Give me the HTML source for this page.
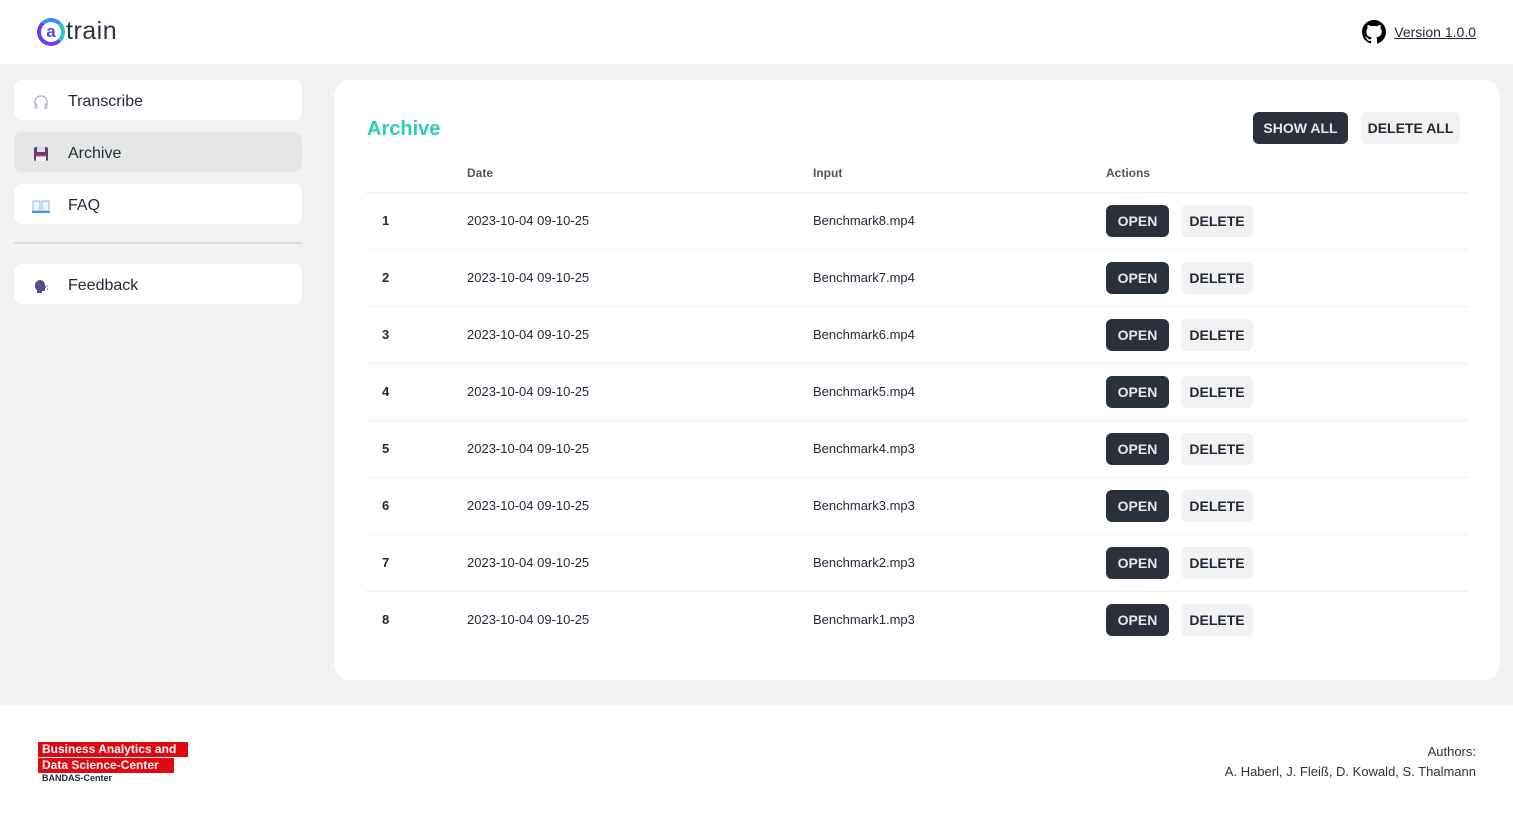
<!DOCTYPE html>
<html><head><meta charset="utf-8"><style>
*{box-sizing:border-box;margin:0;padding:0}
body{width:1513px;height:815px;background:#f2f2f2;font-family:"Liberation Sans",sans-serif;color:#1f2937;position:relative;overflow:hidden}
.top{position:absolute;left:0;top:0;width:1513px;height:64px;background:#fff}
.logo{position:absolute;left:37px;top:17px;display:flex;align-items:center}
.logo .a{width:28px;height:28px;border-radius:50%;border:4px solid #6d3df0;border-right-color:#22c9c9;border-top-color:#3b8ef0;display:flex;align-items:center;justify-content:center;font-size:17px;font-weight:bold;color:#5b43e8}
.logo span.t{font-size:25px;color:#2d3340;margin-left:1px;letter-spacing:0.5px}
.ver{position:absolute;right:37px;top:20px;display:flex;align-items:center;font-size:14px;color:#1f2937}
.ver a{color:#1f2937;text-decoration:underline;margin-left:8px}
.nav{position:absolute;left:14px;width:288px;height:40px;background:#fff;border-radius:8px;display:flex;align-items:center;font-size:16px;color:#1f2937;padding-top:3px}
.nav .ic{width:54px;display:flex;justify-content:center;font-size:15px}
.nav.act{background:#e5e7e6}
.hr{position:absolute;left:14px;top:242px;width:288px;height:2px;background:#dcdcdc}
.card{position:absolute;left:334px;top:80px;width:1166px;height:600px;background:#fff;border-radius:16px}
h1{position:absolute;left:33px;top:38px;font-size:20px;color:#2bcfb6;font-weight:bold}
.btn{position:absolute;height:32px;border-radius:6px;font-size:14px;font-weight:bold;display:flex;align-items:center;justify-content:center;text-transform:uppercase}
.dark{background:#2a303c;color:#e5e7eb}
.lite{background:#f2f2f2;color:#1f2937}
table{position:absolute;left:32px;top:80px;width:1102px;border-collapse:collapse;font-size:13px}
th{text-align:left;font-size:12px;color:#555;font-weight:bold;height:32px;border-bottom:1px solid #eee;padding-bottom:6px}
td{height:57px;border-bottom:1px solid #eee;color:#1f2937}
tr:last-child td{border-bottom:none}
.foot{position:absolute;left:0;top:705px;width:1513px;height:110px;background:#fff}
.red{background:#e30613;color:#fff;font-weight:bold;font-size:12px;line-height:15px;padding:0 4px;display:inline-block;white-space:nowrap}
</style></head><body>
<div class="top">
 <div class="logo"><div class="a">a</div><span class="t">train</span></div>
 <div class="ver"><svg width="24" height="24" viewBox="0 0 16 16"><path fill="#000" d="M8 0C3.58 0 0 3.58 0 8c0 3.54 2.29 6.530 5.47 7.59.4.07.55-.17.55-.38v-1.33c-2.23.48-2.7-1.07-2.7-1.07-.36-.92-.89-1.170-.89-1.17-.73-.5.06-.49.06-.49.8.06 1.23.83 1.23.83.72 1.22 1.870.87 2.33.66.07-.52.28-.87.51-1.07-1.78-.2-3.65-.89-3.65-3.95 0-.87.31-1.59.83-2.15-.08-.2-.36-1.02.08-2.12 0 0 .67-.21 2.2.82a7.6 7.6 0 0 1 4 0c1.53-1.04 2.2-.82 2.2-.82.44 1.1.16 1.92.08 2.12.51.56.82 1.27.82 2.15 0 3.07-1.87 3.75-3.65 3.95.29.25.54.73.54 1.48v2.2c0 .21.15.46.55.38A8 8 0 0 0 16 8c0-4.42-3.58-8-8-8z"/></svg><a>Version 1.0.0</a></div>
</div>
<div class="nav" style="top:80px"><div class="ic"><svg width="16" height="16" viewBox="0 0 16 16"><path d="M2 11V8a6 6 0 0 1 12 0v3" fill="none" stroke="#bbb" stroke-width="1.5"/><rect x="1.5" y="9" width="3" height="6" rx="1" fill="#c9c0dc"/><rect x="11.5" y="9" width="3" height="6" rx="1" fill="#c9c0dc"/></svg></div>Transcribe</div>
<div class="nav act" style="top:132px"><div class="ic"><svg width="16" height="16" viewBox="0 0 16 16"><rect x="1" y="1" width="14" height="14" rx="2" fill="#5b3f7a"/><rect x="4" y="1" width="8" height="5" fill="#ddd"/><rect x="3" y="9" width="10" height="6" fill="#f5f5f5"/><rect x="3" y="9" width="10" height="1.5" fill="#e33"/></svg></div>Archive</div>
<div class="nav" style="top:184px"><div class="ic"><svg width="18" height="14" viewBox="0 0 18 14"><path d="M1 2h7v10H1zM10 2h7v10h-7z" fill="#eef4fb" stroke="#8fb8e0"/><rect x="0" y="12" width="18" height="2" fill="#3aa0e0"/></svg></div>FAQ</div>
<div class="hr"></div>
<div class="nav" style="top:264px"><div class="ic"><svg width="16" height="16" viewBox="0 0 16 16"><path d="M2 7a5 5 0 0 1 10 0l1 3h-1v3h-3v2H4v-3A5 5 0 0 1 2 7z" fill="#5b4a8a"/><circle cx="14" cy="8" r=".8" fill="#8a7ab0"/><circle cx="14.5" cy="11" r=".8" fill="#8a7ab0"/></svg></div>Feedback</div>
<div class="card">
 <h1>Archive</h1>
 <div class="btn dark" style="left:919px;top:32px;width:95px">Show all</div>
 <div class="btn lite" style="left:1027px;top:32px;width:99px">Delete all</div>
 <table>
  <tr><th style="width:101px"></th><th style="width:346px">Date</th><th style="width:293px">Input</th><th>Actions</th></tr>
  <tbody id="b"></tbody>
 </table>
</div>
<div class="foot">
 <div style="position:absolute;left:38px;top:36px;line-height:15px">
  <div class="red" style="width:150px">Business Analytics and</div><br>
  <div class="red" style="width:136px;margin-top:1px">Data Science-Center</div>
  <div style="font-size:9px;font-weight:bold;margin-left:4px;line-height:11px">BANDAS-Center</div>
 </div>
 <div style="position:absolute;right:37px;top:37px;text-align:right;font-size:13px;line-height:20px;color:#333">Authors:<br>A. Haberl, J. Fleiß, D. Kowald, S. Thalmann</div>
</div>
<script>
var f=["Benchmark8.mp4","Benchmark7.mp4","Benchmark6.mp4","Benchmark5.mp4","Benchmark4.mp3","Benchmark3.mp3","Benchmark2.mp3","Benchmark1.mp3"],h="";
f.forEach(function(x,i){h+='<tr><td style="padding-left:16px;font-weight:bold">'+(i+1)+'</td><td>2023-10-04 09-10-25</td><td>'+x+'</td><td><div style="display:flex;gap:12px"><div class="btn dark" style="position:static;width:63px">Open</div><div class="btn lite" style="position:static;width:72px">Delete</div></div></td></tr>'});
document.getElementById('b').innerHTML=h;
</script>
</body></html>
